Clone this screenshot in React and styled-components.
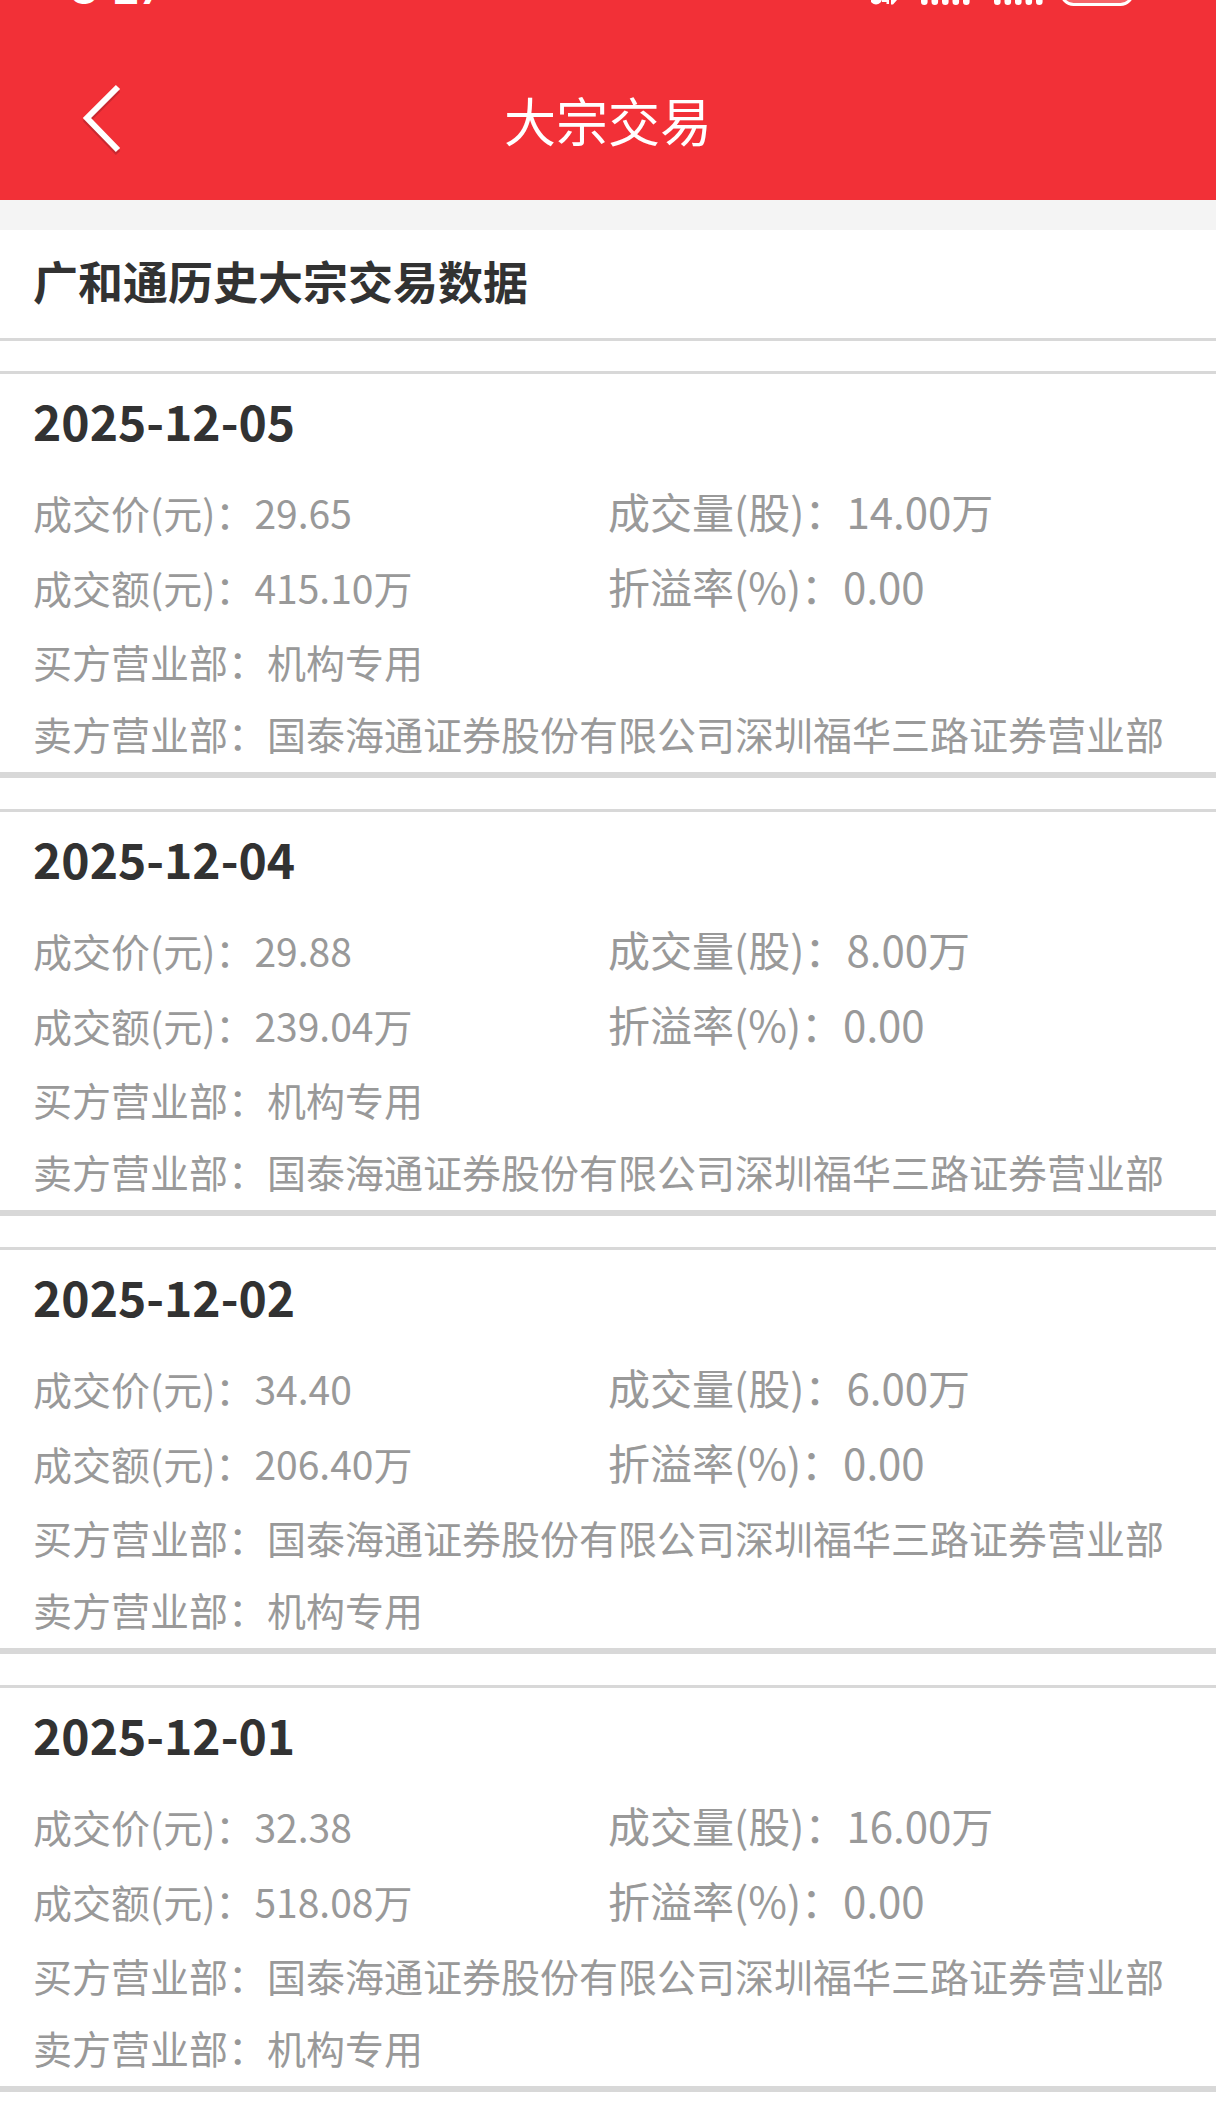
import React from "react"
import styled, { createGlobalStyle } from "styled-components"

const BRANCH = '国泰海通证券股份有限公司深圳福华三路证券营业部';
const ORG = '机构专用';

const trades = [
  { date: '2025-12-05', price: '29.65', volume: '14.00万', amount: '415.10万', rate: '0.00', buyer: ORG, seller: BRANCH },
  { date: '2025-12-04', price: '29.88', volume: '8.00万', amount: '239.04万', rate: '0.00', buyer: ORG, seller: BRANCH },
  { date: '2025-12-02', price: '34.40', volume: '6.00万', amount: '206.40万', rate: '0.00', buyer: BRANCH, seller: ORG },
  { date: '2025-12-01', price: '32.38', volume: '16.00万', amount: '518.08万', rate: '0.00', buyer: BRANCH, seller: ORG },
];

const SignalIcon = () => (
  <svg width="51" height="10" viewBox="0 0 51 10" fill="#ffffff">
    {[0, 10.5, 21, 31.5, 42].map((x) => (
      <rect key={x} x={x} y="-20" width="6.6" height="25" rx="3.3" />
    ))}
  </svg>
)

const StatusBar = () => (
  <Status>
    <Time>8:27</Time>
    <StatusIcons>
      <Signals>
        <svg width="28" height="10" viewBox="0 0 28 10" fill="#ffffff">
          <circle cx="5" cy="-1.5" r="6" />
          <path d="M11 0H18V4H15.5V2H11ZM20 0H26L22 4.5H20Z" />
        </svg>
        <SignalIcon />
        <SignalIcon />
      </Signals>
      <svg width="74" height="10" viewBox="0 0 74 10">
        <rect x="1.5" y="-30" width="71" height="34.5" rx="12" fill="#ffffff" fillOpacity="0.25" stroke="#ffffff" strokeWidth="3" />
      </svg>
    </StatusIcons>
  </Status>
)

const TradeCard = ({ trade }) => (
  <Card>
    <DateTitle>{trade.date}</DateTitle>
    <Row>
      <Cell>成交价(元)：{trade.price}</Cell>
      <LargeCell>成交量(股)：{trade.volume}</LargeCell>
    </Row>
    <Row>
      <Cell>成交额(元)：{trade.amount}</Cell>
      <LargeCell>折溢率(%)：{trade.rate}</LargeCell>
    </Row>
    <Branch>买方营业部：{trade.buyer}</Branch>
    <Branch>卖方营业部：{trade.seller}</Branch>
  </Card>
)

export default function App() {
  return (
    <Page>
      <GlobalStyle />
      <Header>
        <StatusBar />
        <NavBar>
          <BackButton type="button" aria-label="返回">
            <svg width="44" height="76" viewBox="0 0 44 76" fill="none">
              <path d="M38 8L7 39L38 71" stroke="#8c1f26" strokeOpacity="0.4" strokeWidth="6" />
              <path d="M38 5L7 36L38 68" stroke="#ffffff" strokeWidth="6" />
            </svg>
          </BackButton>
          <NavTitle>大宗交易</NavTitle>
        </NavBar>
      </Header>
      <Main>
        <SectionTitle>广和通历史大宗交易数据</SectionTitle>
        <List>
          {trades.map((trade) => (
            <TradeCard key={trade.date} trade={trade} />
          ))}
        </List>
      </Main>
    </Page>
  )
}

const GlobalStyle = createGlobalStyle`
  body {
    margin: 0;
    background-color: #ffffff;
    font-family: "Noto Sans CJK SC", sans-serif;
  }
`

const Page = styled.div`
  width: 100%;
`

const Header = styled.header`
  background-color: #f23037;
  color: #ffffff;
`

const Status = styled.div`
  display: flex;
  align-items: flex-end;
  justify-content: space-between;
  height: 10px;
  padding: 0 82px 0 70px;
  overflow: hidden;
`

const Time = styled.span`
  font-family: Inter, sans-serif;
  font-size: 44px;
  font-weight: 600;
  line-height: 44px;
`

const StatusIcons = styled.div`
  display: flex;
  gap: 15px;
`

const Signals = styled.div`
  display: flex;
  gap: 22px;
`

const NavBar = styled.div`
  display: grid;
  grid-template-columns: 1fr auto 1fr;
  align-items: center;
  height: 190px;
  padding: 30px 80px 0;
  box-sizing: border-box;
`

const BackButton = styled.button`
  display: flex;
  justify-self: start;
  padding: 0;
  border: none;
  background: none;
  cursor: pointer;
`

const NavTitle = styled.h1`
  margin: 0;
  font-size: 52px;
  font-weight: 400;
  line-height: 76px;
`

const Main = styled.main`
  border-top: 30px solid #f4f4f4;
`

const SectionTitle = styled.h2`
  margin: 0;
  padding: 0 33px 6px;
  border-bottom: 3px solid #d8d8d8;
  color: #323232;
  font-size: 45px;
  font-weight: 700;
  line-height: 102px;
`

const List = styled.div`
  display: flex;
  flex-direction: column;
  gap: 31px;
  padding: 30px 0 19px;
`

const Card = styled.section`
  border-top: 3px solid #d8d8d8;
  border-bottom: 6px solid #d8d8d8;
  padding: 0 33px 3px;
  color: #999999;
  font-size: 39px;
`

const DateTitle = styled.h3`
  margin: 0 0 9px;
  color: #323232;
  font-size: 48px;
  font-weight: 700;
  line-height: 92px;
`

const Row = styled.div`
  display: grid;
  grid-template-columns: 1fr 1fr;
`

const Cell = styled.div`
  line-height: 75px;
`

const LargeCell = styled.div`
  font-size: 42px;
  line-height: 72px;
`

const Branch = styled.div`
  line-height: 72px;
`
